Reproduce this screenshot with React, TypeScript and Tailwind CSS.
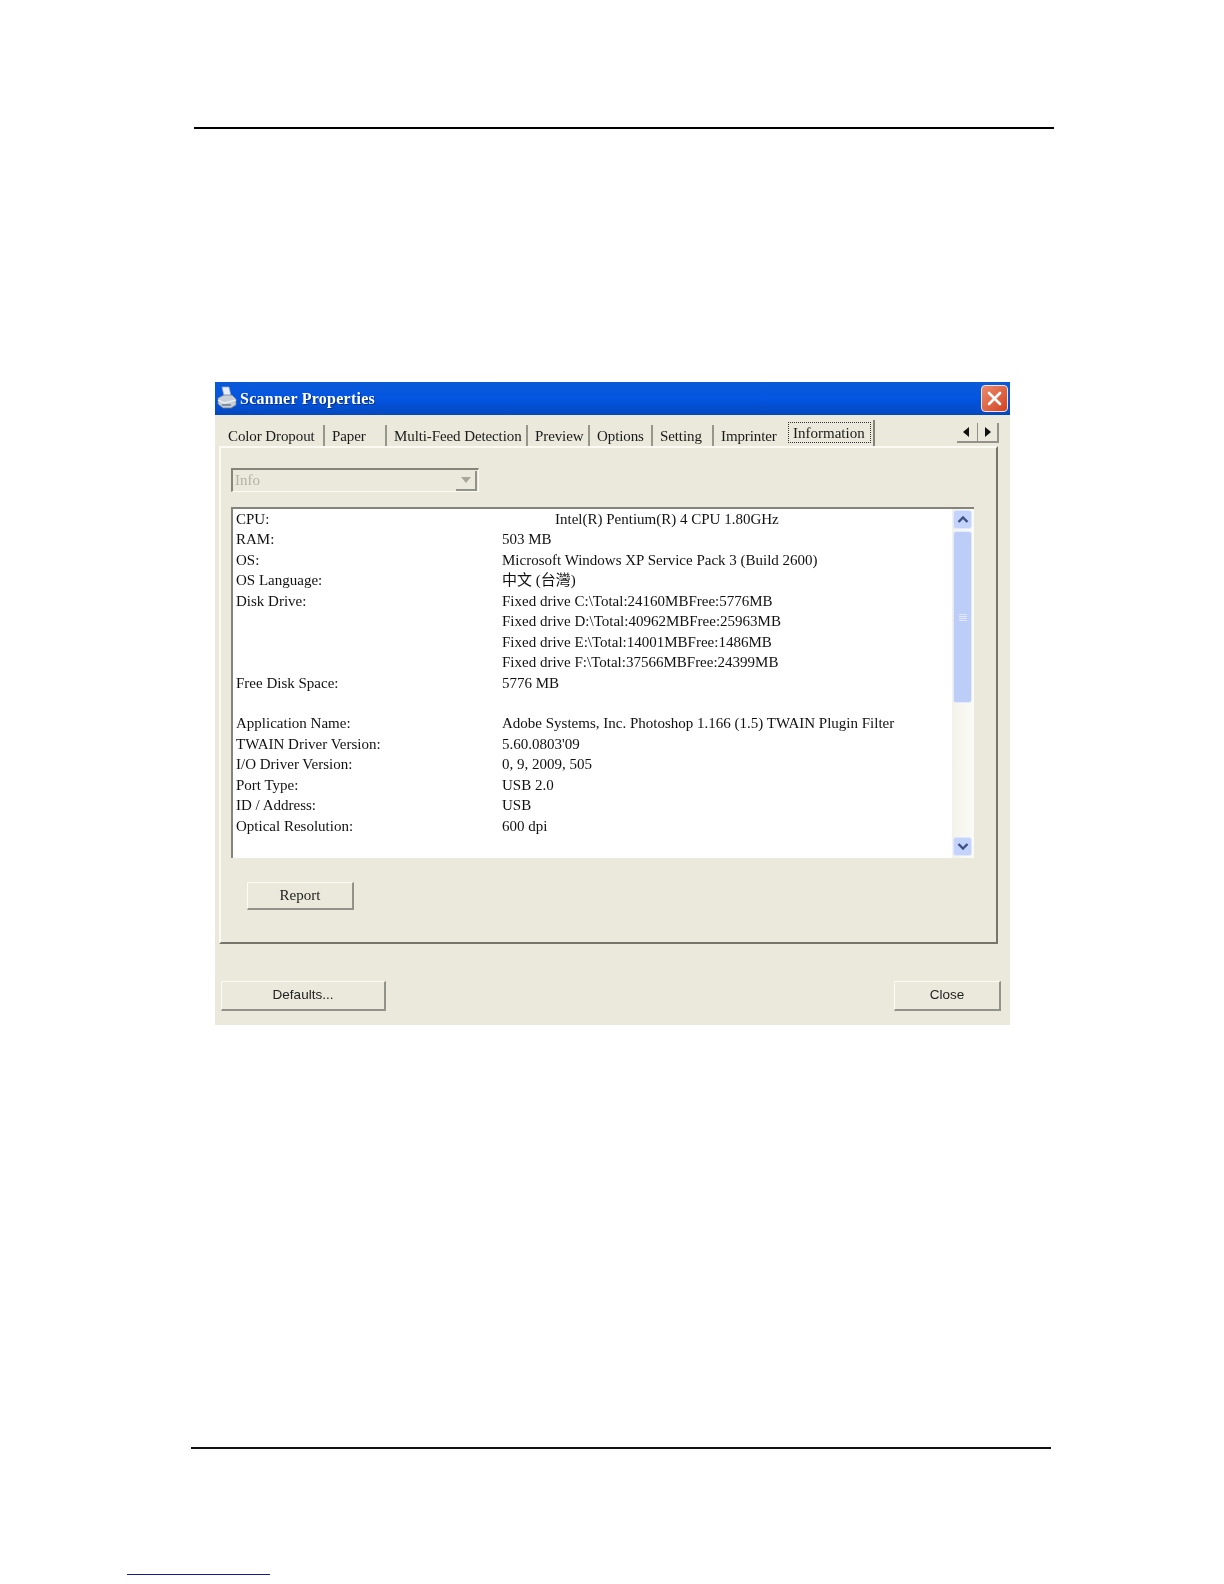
const serif = "font-['Liberation_Serif','Noto_Sans_CJK_TC',serif]";

const rows: [string, string][] = [
  ["RAM:", "503 MB"],
  ["OS:", "Microsoft Windows XP Service Pack 3 (Build 2600)"],
  ["OS Language:", "中文 (台灣)"],
  ["Disk Drive:", "Fixed drive C:\\Total:24160MBFree:5776MB"],
  ["", "Fixed drive D:\\Total:40962MBFree:25963MB"],
  ["", "Fixed drive E:\\Total:14001MBFree:1486MB"],
  ["", "Fixed drive F:\\Total:37566MBFree:24399MB"],
  ["Free Disk Space:", "5776 MB"],
  ["", ""],
  ["Application Name:", "Adobe Systems, Inc. Photoshop 1.166 (1.5) TWAIN Plugin Filter"],
  ["TWAIN Driver Version:", "5.60.0803'09"],
  ["I/O Driver Version:", "0, 9, 2009, 505"],
  ["Port Type:", "USB 2.0"],
  ["ID / Address:", "USB"],
  ["Optical Resolution:", "600 dpi"],
];

const tabs: [string, string, string][] = [
  ["Color Dropout", "w-[104px]", "border-r-[#97968b]"],
  ["Paper", "w-[62px]", "border-r-[#97968b]"],
  ["Multi-Feed Detection", "w-[141px]", "border-r-[#97968b]"],
  ["Preview", "w-[62px]", "border-r-[#97968b]"],
  ["Options", "w-[63px]", "border-r-[#97968b]"],
  ["Setting", "w-[61px]", "border-r-[#97968b]"],
  ["Imprinter", "w-[71px]", "border-r-transparent"],
];

function Printer() {
  return (
    <svg width="22" height="26" viewBox="0 0 22 26" className="shrink-0">
      <path d="M6 1 L13 1 L15 10 L8 10 Z" fill="#e8eefb" stroke="#8fa6c8" strokeWidth="0.8" />
      <path d="M2 12 L8 9 L16 9 L20 13 L20 19 L15 22 L7 22 L2 18 Z" fill="#c9cfd6" stroke="#6e7f92" strokeWidth="0.8" />
      <path d="M2 14 L8 17 L20 14" fill="none" stroke="#f3f5f7" strokeWidth="1.2" />
      <path d="M6 19 L15 19" stroke="#56677a" strokeWidth="1.2" />
    </svg>
  );
}

function Chevron({ up }: { up?: boolean }) {
  return (
    <svg width="12" height="9" viewBox="0 0 12 9">
      <path d={up ? "M1.5 7 L6 2.5 L10.5 7" : "M1.5 2 L6 6.5 L10.5 2"} fill="none" stroke="#3f5184" strokeWidth="2.4" />
    </svg>
  );
}

function ScrollButton({ up }: { up?: boolean }) {
  return (
    <div className="w-[19px] h-[19px] rounded-[3px] bg-[#c3d3fb] border border-[#dfe8fd] flex items-center justify-center">
      <Chevron up={up} />
    </div>
  );
}

function Button({ label, cls, sans }: { label: string; cls: string; sans?: boolean }) {
  return (
    <div
      className={`${cls} flex items-center justify-center bg-[#ebe9db] border-t border-l border-t-[#fbfaf3] border-l-[#fbfaf3] border-r-2 border-b-2 border-r-[#93928a] border-b-[#93928a] text-[#222] ${sans ? "font-['Liberation_Sans',sans-serif] text-[13.5px]" : `${serif} text-[15px]`}`}
    >
      {label}
    </div>
  );
}

export default function App() {
  return (
    <div className="w-[1224px] h-[1584px] bg-white overflow-hidden flex flex-col">
      <div className="ml-[194px] mt-[127px] w-[860px] h-[2px] bg-black shrink-0" />

      <div className={`ml-[215px] mt-[253px] w-[795px] h-[643px] bg-[#ebe9db] shrink-0 flex flex-col blur-[0.35px] ${serif} text-[#1a1a1a]`}>
        <div className="h-[33px] shrink-0 flex items-center pl-[1px] pr-[2px] bg-gradient-to-b from-[#0a5ad6] via-[#0455e2] to-[#0448bf]">
          <Printer />
          <span className="ml-[2px] text-white font-bold text-[16px] tracking-[0.25px] [text-shadow:1px_1px_0_#0a2f80]">Scanner Properties</span>
          <div className="ml-auto w-[27px] h-[27px] rounded-[4px] bg-gradient-to-br from-[#e98a6c] to-[#d2401e] border border-[#f3e4dc] flex items-center justify-center">
            <svg width="17" height="17" viewBox="0 0 17 17">
              <path d="M3 3 L14 14 M14 3 L3 14" stroke="white" strokeWidth="2.6" strokeLinecap="round" />
            </svg>
          </div>
        </div>

        <div className="h-[31px] shrink-0 pl-[6px] flex items-end relative">
          {tabs.map(([t, w, b]) => (
            <div key={t} className={`${w} h-[21px] pl-[7px] pt-[1px] text-[15px] leading-[20px] tracking-[-0.1px] whitespace-nowrap border-r-2 ${b}`}>
              {t}
            </div>
          ))}
          <div className="w-[90px] h-[26px] p-[2px] pl-[3px] border-r-2 border-r-[#85847a] bg-[#ebe9db]">
            <div className="h-[21px] border border-dotted border-[#333] text-[15px] leading-[20px] pl-[4px] whitespace-nowrap">Information</div>
          </div>
          <div className="absolute right-[11px] top-[8px] w-[42px] h-[20px] flex border-r-2 border-b-2 border-[#93928a] bg-[#ebe9db]">
            <div className="flex-1 flex items-center justify-center border-r border-[#93928a] text-[#111]">
              <svg width="7" height="10" viewBox="0 0 7 10"><path d="M6 0 L6 10 L0 5 Z" fill="#111" /></svg>
            </div>
            <div className="flex-1 flex items-center justify-center">
              <svg width="7" height="10" viewBox="0 0 7 10"><path d="M1 0 L1 10 L7 5 Z" fill="#111" /></svg>
            </div>
          </div>
        </div>

        <div className="ml-[4px] w-[779px] h-[498px] shrink-0 border-t-2 border-l-2 border-t-[#fbfaf3] border-l-[#fbfaf3] border-r-2 border-b-2 border-r-[#76756b] border-b-[#76756b] pl-[10px] pt-[20px] flex flex-col">
          <div className="w-[248px] h-[24px] shrink-0 border-t-2 border-l-2 border-t-[#85847a] border-l-[#85847a] border-r border-b border-r-[#fbfaf3] border-b-[#fbfaf3] bg-[#ebe9db] flex items-center justify-between pr-[1px]">
            <span className="pl-[2px] text-[15px] text-[#b3b2a6]">Info</span>
            <div className="w-[21px] h-[20px] bg-[#ebe9db] border-r-2 border-b-2 border-[#93928a] flex items-center justify-center">
              <svg width="10" height="6" viewBox="0 0 10 6"><path d="M0 0 L10 0 L5 6 Z" fill="#a8a79c" /></svg>
            </div>
          </div>

          <div className="mt-[15px] w-[743px] h-[351px] shrink-0 bg-white border-t-2 border-l-2 border-t-[#85847a] border-l-[#85847a] flex">
            <div className="flex-1 pl-[3px] text-[15px] leading-[20.45px] text-[#111]">
              <div className="flex h-[20.45px] whitespace-nowrap">
                <span className="w-[266px] shrink-0">CPU:</span>
                <span className="pl-[53px]">Intel(R) Pentium(R) 4 CPU 1.80GHz</span>
              </div>
              {rows.map(([a, b], i) => (
                <div key={i} className="flex h-[20.45px] whitespace-nowrap">
                  <span className="w-[266px] shrink-0">{a}</span>
                  <span>{b}</span>
                </div>
              ))}
            </div>
            <div className="w-[22px] shrink-0 bg-gradient-to-r from-[#f3f2ea] to-[#fbfbf7] pl-[1px] pt-[1px] flex flex-col">
              <ScrollButton up />
              <div className="mt-[2px] w-[19px] h-[172px] rounded-[3px] bg-[#bccdf8] border border-[#e4ebfc] flex flex-col items-center justify-center gap-[1px]">
                <div className="w-[8px] h-px bg-[#dfe8fd]" />
                <div className="w-[8px] h-px bg-[#dfe8fd]" />
                <div className="w-[8px] h-px bg-[#dfe8fd]" />
                <div className="w-[8px] h-px bg-[#dfe8fd]" />
              </div>
              <div className="mt-auto mb-[2px]">
                <ScrollButton />
              </div>
            </div>
          </div>

          <Button label="Report" cls="ml-[16px] mt-[24px] w-[107px] h-[28px]" />
        </div>

        <div className="mt-[37px] mx-[6px] flex justify-between pr-[3px]">
          <Button label="Defaults..." cls="w-[165px] h-[30px]" sans />
          <Button label="Close" cls="w-[107px] h-[30px]" sans />
        </div>
      </div>

      <div className="ml-[191px] mt-[422px] w-[860px] h-[2px] bg-[#111] shrink-0" />
      <div className="ml-[127px] mt-[125px] w-[143px] h-[1px] bg-[#1a1a8c] shrink-0" />
    </div>
  );
}
